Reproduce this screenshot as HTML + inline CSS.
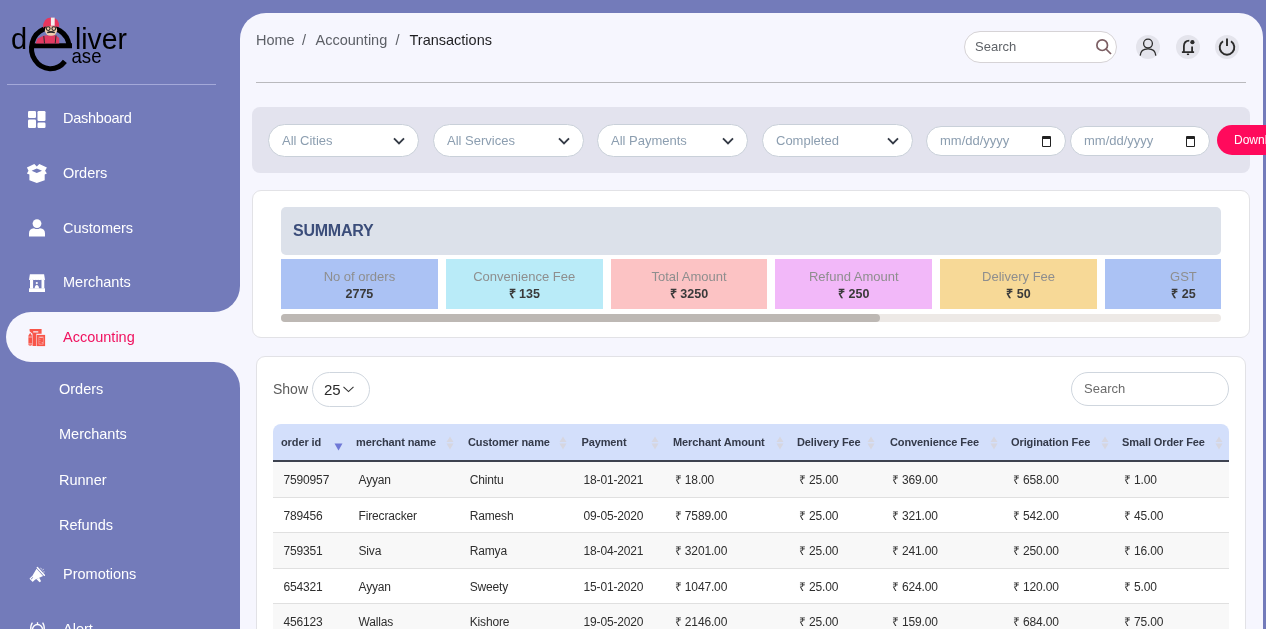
<!DOCTYPE html>
<html><head><meta charset="utf-8">
<style>
*{box-sizing:border-box;margin:0;padding:0}
html,body{width:1266px;height:629px;overflow:hidden;-webkit-font-smoothing:antialiased;background:#737bba;font-family:"Liberation Sans",sans-serif;position:relative}
.a{position:absolute}
.nav{position:absolute;left:63px;color:#fff;font-size:14.5px;line-height:18px;white-space:nowrap}
.sub{position:absolute;left:59px;color:#fff;font-size:14.5px;line-height:18px;white-space:nowrap}
.ico{position:absolute}
.sel{position:absolute;top:111px;width:151px;height:33px;border:1px solid #c9d0d9;border-radius:16.5px;background:#fff;font-size:13px;line-height:31px;padding-left:13px;color:#8c9eb0;white-space:nowrap}
.chev{position:absolute;left:124px;top:11.5px}
.dt{position:absolute;top:112.5px;width:140px;height:30px;border:1px solid #c9d0d9;border-radius:15px;background:#fff;font-size:13px;line-height:28px;padding-left:13px;color:#8c9eb0;white-space:nowrap}
.dt:after{content:"";position:absolute;left:115px;top:9px;width:7px;height:7px;border:1.6px solid #222;border-top-width:3px;border-radius:1px}
.tile{position:absolute;top:0;width:156.8px;height:50px;text-align:center}
.tl{position:absolute;left:0;right:0;top:10px;font-size:13px;line-height:16px;color:#8e8e8e}
.tv{position:absolute;left:0;right:0;top:28px;font-size:12.5px;line-height:15px;font-weight:bold;color:#3a3a3a}
.th{position:absolute;top:0;font-size:11px;line-height:15px;font-weight:bold;color:#343a4a;white-space:nowrap;letter-spacing:-0.1px}
.td{position:absolute;font-size:12px;line-height:16px;color:#2e2e2e;white-space:nowrap;letter-spacing:-0.15px}
.bc{position:absolute;top:18px;font-size:14.5px;line-height:18px;color:#5c5f66;white-space:nowrap}
#main{position:absolute;left:240px;top:13px;width:1022.5px;height:640px;background:#f6f6fe;border-radius:26px 24px 0 0}
</style></head><body><div style="position:absolute;left:0;top:0;width:1266px;height:629px;will-change:transform">
<!-- light behind corners -->
<div class="a" style="left:200px;top:280px;width:60px;height:110px;background:#f6f6fe"></div>
<div class="a" style="left:0;top:0;width:240px;height:312px;background:#737bba;border-bottom-right-radius:26px"></div>
<div class="a" style="left:0;top:362px;width:240px;height:280px;background:#737bba;border-top-right-radius:26px"></div>
<div class="a" style="left:6px;top:312px;width:250px;height:50px;background:#f6f6fe;border-radius:25px 0 0 25px"></div>

<!-- logo -->
<svg class="a" style="left:0;top:0" width="140" height="80" viewBox="0 0 140 80">
  <text x="11" y="49" font-family="Liberation Sans" font-size="29" fill="#000">d</text>
  <text x="75" y="49" font-family="Liberation Sans" font-size="29" fill="#000" textLength="52" lengthAdjust="spacingAndGlyphs">liver</text>
  <text x="71.5" y="63" font-family="Liberation Sans" font-size="21" fill="#000" textLength="30" lengthAdjust="spacingAndGlyphs">ase</text>
  <!-- big e -->
  <path d="M69.16 45.8 A18.9 20.4 0 1 0 64.9 61.4" fill="none" stroke="#000" stroke-width="5"/>
  <path d="M30.5 45.8 H72" stroke="#000" stroke-width="5"/>
  <!-- shirt -->
  <path d="M35.6 43.6 L37.5 38.5 L44 35.6 L56 35.2 L59.2 38 L59.2 43.6 Z" fill="#e23a62"/>
  <path d="M43.8 36 L44.5 43.5 M56 35.5 L55.2 43.5" stroke="#2a2a2a" stroke-width="1"/>
  <!-- face -->
  <ellipse cx="51" cy="30.2" rx="6.1" ry="5.6" fill="#f3cfae"/>
  <!-- helmet -->
  <path d="M43 28.5 Q42.6 17.4 51.2 17.4 Q59.6 17.4 59.3 27.5 L58.5 26.8 Q51 25.6 44.2 26.8 Z" fill="#e8365d"/>
  <path d="M50.9 17.6 H54.7 V25.7 H50.9 Z" fill="#f4f0f0"/>
  <circle cx="48.2" cy="28.6" r="1.9" fill="none" stroke="#2a2a2a" stroke-width="1.1"/>
  <circle cx="53.8" cy="28.6" r="1.9" fill="none" stroke="#2a2a2a" stroke-width="1.1"/>
  <path d="M47.3 32.6 Q51 30.6 54.7 32.6 Q51 31.8 47.3 32.6 Z" stroke="#2a2a2a" stroke-width="1.2" fill="#2a2a2a"/>
</svg>
<div class="a" style="left:6.5px;top:84px;width:209.5px;height:1px;background:#a4a9d9"></div>

<!-- nav icons -->
<svg class="ico" style="left:28px;top:111px" width="18" height="18" viewBox="0 0 18 18" fill="#fff">
  <rect x="0" y="0" width="8" height="7" rx="1.2"/><rect x="0" y="8.5" width="8" height="8.5" rx="1.2"/>
  <rect x="9.5" y="0" width="8" height="10" rx="1.2"/><rect x="9.5" y="11.5" width="8" height="5.5" rx="1.2"/>
</svg>
<div class="nav" style="top:109px;letter-spacing:-0.25px">Dashboard</div>
<svg class="ico" style="left:24px;top:160px" width="26" height="26" viewBox="0 0 26 26" fill="#fff">
  <path fill-rule="evenodd" d="M2.9 7.4 L10.3 3.9 L12.8 6.6 L15.3 3.9 L22.9 7.6 L21.1 10.7 L22.9 13.6 L20.7 14.5 V20.3 L12.8 23.1 L5.4 20.3 V14.5 L2.9 13.6 L4.5 10.7 Z M7.6 10.7 L12.8 8.5 L18 10.7 L12.8 13 Z"/>
</svg>
<div class="nav" style="top:164px">Orders</div>
<svg class="ico" style="left:29px;top:219px" width="16" height="18" viewBox="0 0 16 18" fill="#fff">
  <circle cx="8" cy="4.6" r="4.4"/>
  <path d="M0 17.5 V14.5 Q0 9.5 5 9.2 Q8 11 11 9.2 Q16 9.5 16 14.5 V17.5 Z"/>
</svg>
<div class="nav" style="top:219px">Customers</div>
<svg class="ico" style="left:20px;top:265px" width="40" height="35" viewBox="0 0 40 35" fill="#fff">
  <path d="M9.9 9.2 H24.1 L25 14.7 Q24.2 15.4 23.4 14.8 Q22.6 15.4 21.8 14.8 Q21 15.4 20.2 14.8 Q19.4 15.4 18.6 14.8 Q17.8 15.4 17 14.8 Q16.2 15.4 15.4 14.8 Q14.6 15.4 13.8 14.8 Q13 15.4 12.2 14.8 Q11.4 15.4 10.6 14.8 Q9.8 15.4 9 14.7 Z"/>
  <rect x="10" y="15" width="3.1" height="8.6"/><rect x="21.5" y="15" width="2.8" height="8.6"/>
  <rect x="9" y="23.3" width="16" height="3.7"/>
  <circle cx="16.8" cy="18.1" r="1.1"/><path d="M14.6 23.4 Q14.8 20.2 16.8 20 Q18.8 20.2 19 23.4 Z"/>
</svg>
<div class="nav" style="top:273px">Merchants</div>
<svg class="ico" style="left:24px;top:325px" width="26" height="26" viewBox="0 0 26 26" fill="#f85549">
  <path fill-rule="evenodd" d="M5.6 4 H17.6 V8.8 H12.3 V20.9 H8.5 V8.8 L5.6 6.2 Z M9.2 6.2 V7.6 H14.3 V6.2 Z"/>
  <path d="M6.2 7.8 L8 10.8 V20 Q6.2 21.6 4.4 20 V10.8 Z"/>
  <path d="M4.3 12 H8.1 M4.3 18.9 H8.1" stroke="#f6f6fe" stroke-width="0.6"/>
  <rect x="12.8" y="9.9" width="8.3" height="11.2"/>
  <rect x="14.9" y="11.9" width="4.3" height="7.3" fill="none" stroke="#f6f6fe" stroke-width="0.5" opacity="0.6"/>
  <rect x="15.4" y="12.3" width="3.4" height="0.7" fill="#f6f6fe" opacity="0.8"/>
  <rect x="15.6" y="14.3" width="0.7" height="0.7" fill="#f6f6fe" opacity="0.7"/><rect x="15.6" y="16.1" width="0.7" height="0.7" fill="#f6f6fe" opacity="0.7"/><rect x="15.6" y="17.9" width="0.7" height="0.7" fill="#f6f6fe" opacity="0.7"/>
  <rect x="17.8" y="17" width="0.8" height="1.6" fill="#f6f6fe" opacity="0.7"/>
</svg>
<div class="nav" style="top:328px;color:#f0125f">Accounting</div>
<div class="sub" style="top:380px">Orders</div>
<div class="sub" style="top:425px">Merchants</div>
<div class="sub" style="top:471px">Runner</div>
<div class="sub" style="top:516px">Refunds</div>
<svg class="ico" style="left:24px;top:560px" width="30" height="35" viewBox="0 0 30 35" fill="#fff">
  <g transform="translate(12.4 15.4) rotate(-42)">
    <rect x="-7.3" y="-2.3" width="4.2" height="4.6" rx="0.5"/>
    <path d="M-3.4 -2.4 L4.6 -4.9 V4.9 L-3.4 2.4 Z"/>
    <rect x="5.2" y="-5.9" width="1.5" height="11.8" rx="0.6"/>
    <path d="M-2.5 2.6 L0.6 3.6 L-0.4 7.4 L-2.2 7.2 Z"/>
    <path d="M-6.4 -0.8 H-4" stroke="#737bba" stroke-width="0.9"/>
  </g>
  <path d="M16.7 7.8 L17.5 9.4 M19.5 8.9 L18.6 10.5 M20.6 11.9 L19.2 12.1" stroke="#fff" stroke-width="0.9" opacity="0.8"/>
</svg>
<div class="nav" style="top:565px">Promotions</div>
<svg class="ico" style="left:24px;top:615px" width="30" height="20" viewBox="0 0 30 20" fill="none" stroke="#fff" stroke-width="1.3">
  <circle cx="13.5" cy="14.5" r="5"/><path d="M13.5 7.2 V9.5"/><path d="M8.4 7.6 Q6.2 10.6 6.8 15.5 M18.6 7.6 Q20.8 10.6 20.2 15.5"/>
</svg>
<div class="nav" style="top:619.5px">Alert</div>

<div id="main">
  <div class="bc" style="left:16px">Home</div><div class="bc" style="left:62px">/</div><div class="bc" style="left:75.5px">Accounting</div><div class="bc" style="left:155.5px">/</div><div class="bc" style="left:169.5px;color:#1f1f22">Transactions</div>
  <div class="a" style="left:16px;top:69px;width:990px;height:1px;background:#b9b9bd"></div>
  <!-- search -->
  <div class="a" style="left:724px;top:18px;width:153px;height:32px;border:1px solid #d6d3d6;border-radius:16px;background:#fff"></div>
  <div class="a" style="left:735px;top:26px;font-size:13px;line-height:16px;color:#5f6368">Search</div>
  <svg class="a" style="left:855px;top:25px" width="18" height="18" viewBox="0 0 18 18" fill="none" stroke="#7b5e63" stroke-width="1.7">
    <circle cx="7.2" cy="7.2" r="5.3"/><path d="M11 11 L16 16"/>
  </svg>
  <!-- icon circles -->
  <div class="a" style="left:896px;top:22px;width:24px;height:24px;border-radius:50%;background:#e4e4ec"></div>
  <div class="a" style="left:935.5px;top:22px;width:24px;height:24px;border-radius:50%;background:#e4e4ec"></div>
  <div class="a" style="left:975px;top:22px;width:24px;height:24px;border-radius:50%;background:#e4e4ec"></div>
  <svg class="a" style="left:896px;top:22px" width="24" height="24" viewBox="0 0 24 24" fill="none" stroke="#2b2b2b" stroke-width="1.3">
    <circle cx="12" cy="8.6" r="4.4"/><path d="M4.2 20.6 Q4.6 13.8 12 13.8 Q19.4 13.8 19.8 20.6"/>
  </svg>
  <svg class="a" style="left:935.5px;top:22px" width="24" height="24" viewBox="0 0 24 24" fill="none" stroke="#2b2b2b" stroke-width="1.5">
    <path d="M13.3 5.6 Q8.2 5.6 7.9 11 V16.2 M16.1 11.4 V16.2 M5.9 17.2 H18.1" stroke-width="1.8"/><path d="M10.9 19.3 H13.1" stroke-width="1.5"/>
    <circle cx="16.4" cy="7.2" r="2.1" fill="#2b2b2b" stroke="none"/>
  </svg>
  <svg class="a" style="left:975px;top:22px" width="24" height="24" viewBox="0 0 24 24" fill="none" stroke="#2b2b2b" stroke-width="1.9">
    <path d="M8 6.3 A7.3 7.3 0 1 0 16 6.3"/><path d="M12 3.6 V11"/>
  </svg>

  <!-- filter panel -->
  <div class="a" style="left:12px;top:94px;width:998px;height:66px;border-radius:8px;background:#e3e3ee"></div>
  <div class="sel" style="left:28px">All Cities<svg class="chev" width="12" height="8" viewBox="0 0 12 8"><path d="M1 1.3 L6 6.3 L11 1.3" fill="none" stroke="#343a45" stroke-width="1.9"/></svg></div>
  <div class="sel" style="left:193px">All Services<svg class="chev" width="12" height="8" viewBox="0 0 12 8"><path d="M1 1.3 L6 6.3 L11 1.3" fill="none" stroke="#343a45" stroke-width="1.9"/></svg></div>
  <div class="sel" style="left:357px">All Payments<svg class="chev" width="12" height="8" viewBox="0 0 12 8"><path d="M1 1.3 L6 6.3 L11 1.3" fill="none" stroke="#343a45" stroke-width="1.9"/></svg></div>
  <div class="sel" style="left:522px">Completed<svg class="chev" width="12" height="8" viewBox="0 0 12 8"><path d="M1 1.3 L6 6.3 L11 1.3" fill="none" stroke="#343a45" stroke-width="1.9"/></svg></div>
  <div class="dt" style="left:686px">mm/dd/yyyy</div>
  <div class="dt" style="left:830px">mm/dd/yyyy</div>
  <div class="a" style="left:977px;top:112px;width:100px;height:30px;border-radius:15px;background:#ff0a5c;color:#fff;font-size:12px;line-height:30px;padding-left:17px">Download</div>

  <!-- summary card -->
  <div class="a" style="left:12px;top:177px;width:998px;height:148px;border:1px solid #e2e2e6;border-radius:9px;background:#fff"></div>
  <div class="a" style="left:41px;top:194px;width:940px;height:48px;border-radius:5px;background:#dce1ea"></div>
  <div class="a" style="left:53px;top:208.3px;font-size:16px;line-height:19px;font-weight:bold;color:#3b4d7a;letter-spacing:-0.25px">SUMMARY</div>
  <div class="a" style="left:41px;top:246px;width:940px;height:50px;overflow:hidden">
    <div class="tile" style="left:0;background:#abc2f4"><div class="tl">No of orders</div><div class="tv">2775</div></div>
    <div class="tile" style="left:164.8px;background:#b9ebf8"><div class="tl">Convenience Fee</div><div class="tv">&#8377; 135</div></div>
    <div class="tile" style="left:329.6px;background:#fcc3c4"><div class="tl">Total Amount</div><div class="tv">&#8377; 3250</div></div>
    <div class="tile" style="left:494.4px;background:#f2b8f9"><div class="tl">Refund Amount</div><div class="tv">&#8377; 250</div></div>
    <div class="tile" style="left:659.2px;background:#f7d997"><div class="tl">Delivery Fee</div><div class="tv">&#8377; 50</div></div>
    <div class="tile" style="left:824px;background:#abc2f4"><div class="tl">GST</div><div class="tv">&#8377; 25</div></div>
  </div>
  <div class="a" style="left:41px;top:301px;width:940px;height:8px;border-radius:4px;background:#ede9e6"></div>
  <div class="a" style="left:41px;top:301px;width:599px;height:8px;border-radius:4px;background:#bdb8b4"></div>

  <!-- table card -->
  <div class="a" style="left:16px;top:343px;width:990px;height:320px;border:1px solid #e2e2e6;border-radius:9px;background:#fff"></div>
  <div class="a" style="left:33px;top:367px;font-size:14px;line-height:18px;color:#5b5b5b">Show</div>
  <div class="a" style="left:71.5px;top:359px;width:58px;height:35px;border:1px solid #cfd6de;border-radius:17.5px;background:#fff"></div>
  <div class="a" style="left:84px;top:368px;font-size:15px;line-height:18px;color:#2b2b2b">25</div>
  <svg class="a" style="left:103px;top:373px" width="11" height="7" viewBox="0 0 11 7" fill="none" stroke="#333" stroke-width="1.1"><path d="M0.5 0.8 L5.5 5.6 L10.5 0.8"/></svg>
  <div class="a" style="left:831px;top:359px;width:158px;height:34px;border:1px solid #cfd6de;border-radius:17px;background:#fff"></div>
  <div class="a" style="left:844px;top:368px;font-size:13px;line-height:16px;color:#6b6b6b">Search</div>

  <div class="a" style="left:33px;top:411px;width:956px;height:38px;border-radius:8px 8px 0 0;background:#d3dffb;border-bottom:2px solid #3d4250"></div>
  <div class="a" style="left:33px;top:408.7px;width:956px;height:38px">
  <div class="th" style="left:8.0px;top:13px">order id</div>
  <div class="th" style="left:83.0px;top:13px">merchant name</div>
  <div class="th" style="left:195.0px;top:13px">Customer name</div>
  <div class="th" style="left:308.4px;top:13px">Payment</div>
  <div class="th" style="left:400.0px;top:13px">Merchant Amount</div>
  <div class="th" style="left:524.0px;top:13px">Delivery Fee</div>
  <div class="th" style="left:617.0px;top:13px">Convenience Fee</div>
  <div class="th" style="left:738.0px;top:13px">Origination Fee</div>
  <div class="th" style="left:849.0px;top:13px">Small Order Fee</div>
  </div>
  <svg class="a" style="left:94px;top:430px" width="9" height="8" viewBox="0 0 9 8"><path d="M0.5 0.5 H8.5 L4.5 7.5 Z" fill="#6f78d6"/></svg>
  <svg class="a" style="left:205.6px;top:422.5px" width="8" height="14" viewBox="0 0 8 14" fill="#d6d6e0"><path d="M4 0.5 L7.5 6 H0.5 Z M0.5 7.5 H7.5 L4 13.5 Z"/></svg>
  <svg class="a" style="left:319.0px;top:422.5px" width="8" height="14" viewBox="0 0 8 14" fill="#d6d6e0"><path d="M4 0.5 L7.5 6 H0.5 Z M0.5 7.5 H7.5 L4 13.5 Z"/></svg>
  <svg class="a" style="left:410.7px;top:422.5px" width="8" height="14" viewBox="0 0 8 14" fill="#d6d6e0"><path d="M4 0.5 L7.5 6 H0.5 Z M0.5 7.5 H7.5 L4 13.5 Z"/></svg>
  <svg class="a" style="left:536.0px;top:422.5px" width="8" height="14" viewBox="0 0 8 14" fill="#d6d6e0"><path d="M4 0.5 L7.5 6 H0.5 Z M0.5 7.5 H7.5 L4 13.5 Z"/></svg>
  <svg class="a" style="left:627.0px;top:422.5px" width="8" height="14" viewBox="0 0 8 14" fill="#d6d6e0"><path d="M4 0.5 L7.5 6 H0.5 Z M0.5 7.5 H7.5 L4 13.5 Z"/></svg>
  <svg class="a" style="left:749.5px;top:422.5px" width="8" height="14" viewBox="0 0 8 14" fill="#d6d6e0"><path d="M4 0.5 L7.5 6 H0.5 Z M0.5 7.5 H7.5 L4 13.5 Z"/></svg>
  <svg class="a" style="left:860.6px;top:422.5px" width="8" height="14" viewBox="0 0 8 14" fill="#d6d6e0"><path d="M4 0.5 L7.5 6 H0.5 Z M0.5 7.5 H7.5 L4 13.5 Z"/></svg>
  <svg class="a" style="left:975.0px;top:422.5px" width="8" height="14" viewBox="0 0 8 14" fill="#d6d6e0"><path d="M4 0.5 L7.5 6 H0.5 Z M0.5 7.5 H7.5 L4 13.5 Z"/></svg>
  <div class="a" style="left:33px;top:449px;width:956px;height:35.5px;background:#f8f8f8;border-bottom:1px solid #e0e0e0"></div>
  <div class="td" style="left:43.5px;top:459px">7590957</div>
  <div class="td" style="left:118.5px;top:459px">Ayyan</div>
  <div class="td" style="left:229.7px;top:459px">Chintu</div>
  <div class="td" style="left:343.5px;top:459px">18-01-2021</div>
  <div class="td" style="left:434.8px;top:459px">&#8377; 18.00</div>
  <div class="td" style="left:559.0px;top:459px">&#8377; 25.00</div>
  <div class="td" style="left:652.0px;top:459px">&#8377; 369.00</div>
  <div class="td" style="left:773.0px;top:459px">&#8377; 658.00</div>
  <div class="td" style="left:884.0px;top:459px">&#8377; 1.00</div>
  <div class="a" style="left:33px;top:484.5px;width:956px;height:35.5px;background:#fff;border-bottom:1px solid #e0e0e0"></div>
  <div class="td" style="left:43.5px;top:494.5px">789456</div>
  <div class="td" style="left:118.5px;top:494.5px">Firecracker</div>
  <div class="td" style="left:229.7px;top:494.5px">Ramesh</div>
  <div class="td" style="left:343.5px;top:494.5px">09-05-2020</div>
  <div class="td" style="left:434.8px;top:494.5px">&#8377; 7589.00</div>
  <div class="td" style="left:559.0px;top:494.5px">&#8377; 25.00</div>
  <div class="td" style="left:652.0px;top:494.5px">&#8377; 321.00</div>
  <div class="td" style="left:773.0px;top:494.5px">&#8377; 542.00</div>
  <div class="td" style="left:884.0px;top:494.5px">&#8377; 45.00</div>
  <div class="a" style="left:33px;top:520px;width:956px;height:35.5px;background:#f8f8f8;border-bottom:1px solid #e0e0e0"></div>
  <div class="td" style="left:43.5px;top:530px">759351</div>
  <div class="td" style="left:118.5px;top:530px">Siva</div>
  <div class="td" style="left:229.7px;top:530px">Ramya</div>
  <div class="td" style="left:343.5px;top:530px">18-04-2021</div>
  <div class="td" style="left:434.8px;top:530px">&#8377; 3201.00</div>
  <div class="td" style="left:559.0px;top:530px">&#8377; 25.00</div>
  <div class="td" style="left:652.0px;top:530px">&#8377; 241.00</div>
  <div class="td" style="left:773.0px;top:530px">&#8377; 250.00</div>
  <div class="td" style="left:884.0px;top:530px">&#8377; 16.00</div>
  <div class="a" style="left:33px;top:555.5px;width:956px;height:35.5px;background:#fff;border-bottom:1px solid #e0e0e0"></div>
  <div class="td" style="left:43.5px;top:565.5px">654321</div>
  <div class="td" style="left:118.5px;top:565.5px">Ayyan</div>
  <div class="td" style="left:229.7px;top:565.5px">Sweety</div>
  <div class="td" style="left:343.5px;top:565.5px">15-01-2020</div>
  <div class="td" style="left:434.8px;top:565.5px">&#8377; 1047.00</div>
  <div class="td" style="left:559.0px;top:565.5px">&#8377; 25.00</div>
  <div class="td" style="left:652.0px;top:565.5px">&#8377; 624.00</div>
  <div class="td" style="left:773.0px;top:565.5px">&#8377; 120.00</div>
  <div class="td" style="left:884.0px;top:565.5px">&#8377; 5.00</div>
  <div class="a" style="left:33px;top:591px;width:956px;height:35.5px;background:#f8f8f8;border-bottom:1px solid #e0e0e0"></div>
  <div class="td" style="left:43.5px;top:601px">456123</div>
  <div class="td" style="left:118.5px;top:601px">Wallas</div>
  <div class="td" style="left:229.7px;top:601px">Kishore</div>
  <div class="td" style="left:343.5px;top:601px">19-05-2020</div>
  <div class="td" style="left:434.8px;top:601px">&#8377; 2146.00</div>
  <div class="td" style="left:559.0px;top:601px">&#8377; 25.00</div>
  <div class="td" style="left:652.0px;top:601px">&#8377; 159.00</div>
  <div class="td" style="left:773.0px;top:601px">&#8377; 684.00</div>
  <div class="td" style="left:884.0px;top:601px">&#8377; 75.00</div>
</div>
<div class="a" style="left:0;top:560px;width:1266px;height:69px;background:radial-gradient(ellipse 700px 75px at 600px 660px, rgba(0,0,0,0.07), rgba(0,0,0,0) 100%);pointer-events:none"></div>
</div></body></html>
